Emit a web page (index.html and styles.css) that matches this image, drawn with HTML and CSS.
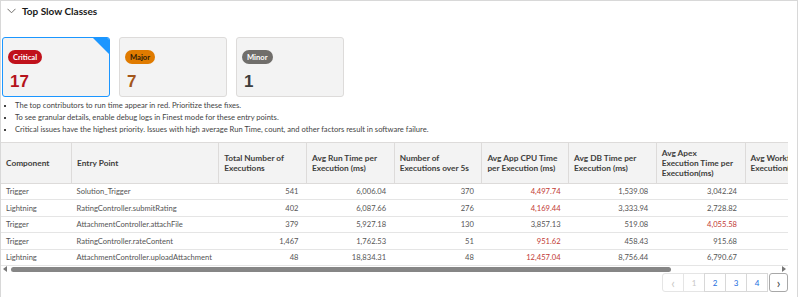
FILE: index.html
```html
<!DOCTYPE html>
<html lang="en">
<head>
  <meta charset="UTF-8">
  <meta name="viewport" content="width=device-width, initial-scale=1.0">
  <title>Top Slow Classes</title>
  <link rel="stylesheet" href="styles.css">
</head>
<body>
  <section class="panel">
    <div class="panel-head">
      <svg class="chev" width="9" height="6" viewBox="0 0 9 6"><path d="M0.5 0.8 L4.5 4.8 L8.5 0.8" fill="none" stroke="#706e6b" stroke-width="1"/></svg>
      <span class="panel-title">Top Slow Classes</span>
    </div>

    <div class="cards">
      <div class="card selected">
        <span class="badge critical">Critical</span>
        <div class="count critical">17</div>
      </div>
      <div class="card">
        <span class="badge major">Major</span>
        <div class="count major">7</div>
      </div>
      <div class="card">
        <span class="badge minor">Minor</span>
        <div class="count minor">1</div>
      </div>
    </div>

    <ul class="notes">
      <li>The top contributors to run time appear in red. Prioritize these fixes.</li>
      <li>To see granular details, enable debug logs in Finest mode for these entry points.</li>
      <li>Critical issues have the highest priority. Issues with high average Run Time, count, and other factors result in software failure.</li>
    </ul>

    <div class="table-wrap">
      <table class="grid">
        <colgroup>
          <col style="width:70px"><col style="width:146px"><col style="width:87px"><col style="width:87px">
          <col style="width:87px"><col style="width:86px"><col style="width:87px"><col style="width:88px"><col style="width:172px">
        </colgroup>
        <thead>
          <tr>
            <th>Component</th>
            <th>Entry Point</th>
            <th>Total Number of Executions</th>
            <th>Avg Run Time per Execution (ms)</th>
            <th>Number of Executions over 5s</th>
            <th>Avg App CPU Time per Execution (ms)</th>
            <th>Avg DB Time per Execution (ms)</th>
            <th>Avg Apex Execution Time per Execution(ms)</th>
            <th>Avg Workflow Execution Time per Execution(ms)</th>
          </tr>
        </thead>
        <tbody>
          <tr>
            <td>Trigger</td><td>Solution_Trigger</td><td class="num">541</td><td class="num">6,006.04</td>
            <td class="num">370</td><td class="num hot">4,497.74</td><td class="num">1,539.08</td><td class="num">3,042.24</td><td class="num">0.00</td>
          </tr>
          <tr>
            <td>Lightning</td><td>RatingController.submitRating</td><td class="num">402</td><td class="num">6,087.66</td>
            <td class="num">276</td><td class="num hot">4,169.44</td><td class="num">3,333.94</td><td class="num">2,728.82</td><td class="num">0.00</td>
          </tr>
          <tr>
            <td>Trigger</td><td>AttachmentController.attachFile</td><td class="num">379</td><td class="num">5,927.18</td>
            <td class="num">130</td><td class="num">3,857.13</td><td class="num">519.08</td><td class="num hot">4,055.58</td><td class="num">0.00</td>
          </tr>
          <tr>
            <td>Trigger</td><td>RatingController.rateContent</td><td class="num">1,467</td><td class="num">1,762.53</td>
            <td class="num">51</td><td class="num hot">951.62</td><td class="num">458.43</td><td class="num">915.68</td><td class="num">0.00</td>
          </tr>
          <tr>
            <td>Lightning</td><td>AttachmentController.uploadAttachment</td><td class="num">48</td><td class="num">18,834.31</td>
            <td class="num">48</td><td class="num hot">12,457.04</td><td class="num">8,756.44</td><td class="num">6,790.67</td><td class="num">0.00</td>
          </tr>
        </tbody>
      </table>
    </div>

    <div class="hscroll">
      <span class="arrow left"></span>
      <div class="track"><div class="thumb"></div></div>
      <span class="arrow right"></span>
    </div>

    <div class="pager">
      <button class="pg disabled">&#8249;</button>
      <button class="pg disabled">1</button>
      <button class="pg link">2</button>
      <button class="pg link">3</button>
      <button class="pg link">4</button>
      <button class="pg next">&#8250;</button>
    </div>
  </section>
</body>
</html>
```

FILE: styles.css
```css
body {
  margin: 0;
  background-color: #fff;
  font-family: 'Lato', 'Open Sans', sans-serif;
  color: #3e3e3c;
}
.panel {
  box-sizing: border-box;
  width: 798px;
  height: 297px;
  border: 1px solid #d8d8d8;
  border-bottom: none;
  padding: 0 9px 0 0;
}
.panel-head {
  display: flex;
  align-items: center;
  gap: 6px;
  height: 20px;
  padding-left: 6px;
}
.panel-title {
  font-weight: bold;
  font-size: 10px;
  color: #181818;
}
.cards {
  display: flex;
  gap: 9px;
  margin-top: 16px;
  padding-left: 1px;
}
.card {
  position: relative;
  box-sizing: border-box;
  width: 108px;
  height: 60px;
  background-color: #f3f3f3;
  border: 1px solid #dddbda;
  border-radius: 3px;
  padding: 6px 5px 0 5px;
  overflow: hidden;
}
.card.selected {
  border: 1.5px solid #1b96ff;
}
.card.selected::after {
  content: '';
  position: absolute;
  top: 0;
  right: 0;
  border-top: 16px solid #1b96ff;
  border-left: 16px solid transparent;
}
.badge {
  display: inline-block;
  height: 14px;
  line-height: 14px;
  padding: 0 5px;
  border-radius: 7px;
  font-size: 7.6px;
  font-weight: bold;
}
.badge.critical {
  background-color: #c0111b;
  color: #fff;
}
.badge.major {
  background-color: #e07b00;
  color: #2b1a08;
}
.badge.minor {
  background-color: #706e6b;
  color: #fff;
}
.count {
  margin-top: 8px;
  padding-left: 2px;
  font-family: 'Liberation Sans', sans-serif;
  font-size: 17px;
  font-weight: bold;
  line-height: 20px;
}
.count.critical {
  color: #b5121b;
}
.count.major {
  color: #a3561a;
}
.count.minor {
  color: #3e3e3c;
}
.notes {
  margin: 2px 0 0 0;
  padding: 0 0 0 14px;
  list-style: square;
  font-size: 7.6px;
  line-height: 12px;
  color: #444;
}
.notes li::marker {
  font-size: 6px;
}
.table-wrap {
  margin-top: 7px;
  overflow: hidden;
  border-top: 1px solid #dddbda;
}
.grid {
  table-layout: fixed;
  border-collapse: collapse;
  width: 918px;
  font-size: 7.6px;
}
.grid th {
  height: 40px;
  box-sizing: border-box;
  padding: 0 10px 0 5px;
  background-color: #f3f3f3;
  border-right: 1px solid #dddbda;
  border-bottom: 1px solid #dddbda;
  text-align: left;
  font-size: 8.3px;
  font-weight: bold;
  line-height: 10px;
  color: #3e3e3c;
  vertical-align: middle;
}
.grid td {
  height: 16.5px;
  box-sizing: border-box;
  padding: 0 5px;
  border-bottom: 1px solid #e5e5e5;
  color: #555;
  white-space: nowrap;
}
.grid td.num {
  text-align: right;
  padding-right: 8px;
}
.grid td.hot {
  color: #c23934;
}
.hscroll {
  display: flex;
  align-items: center;
  height: 6px;
  gap: 2px;
}
.arrow {
  width: 0;
  height: 0;
  border-top: 3px solid transparent;
  border-bottom: 3px solid transparent;
  margin: 0 2px;
}
.arrow.left {
  border-right: 4px solid #777;
}
.arrow.right {
  border-left: 4px solid #777;
}
.track {
  flex: 1;
}
.thumb {
  width: 86%;
  height: 5px;
  border-radius: 3px;
  background-color: #868686;
}
.pager {
  display: flex;
  justify-content: flex-end;
  margin-top: 1px;
}
.pg {
  box-sizing: border-box;
  width: 22px;
  height: 19px;
  margin-left: -1px;
  padding: 0;
  background-color: #fff;
  border: 1px solid #d8d8d8;
  font-family: 'Lato', sans-serif;
  font-size: 8px;
  line-height: 10px;
  color: #1b6ee0;
}
.pg:first-child {
  border-radius: 3px 0 0 3px;
}
.pg.disabled {
  color: #c9c7c5;
  border-color: #e5e5e5;
}
.pg.disabled:first-child {
  font-size: 13px;
}
.pg.next {
  width: 19px;
  margin-left: 1px;
  border-color: #a8a8a8;
  border-radius: 3px;
  color: #3e3e3c;
  font-size: 13px;
}
```
